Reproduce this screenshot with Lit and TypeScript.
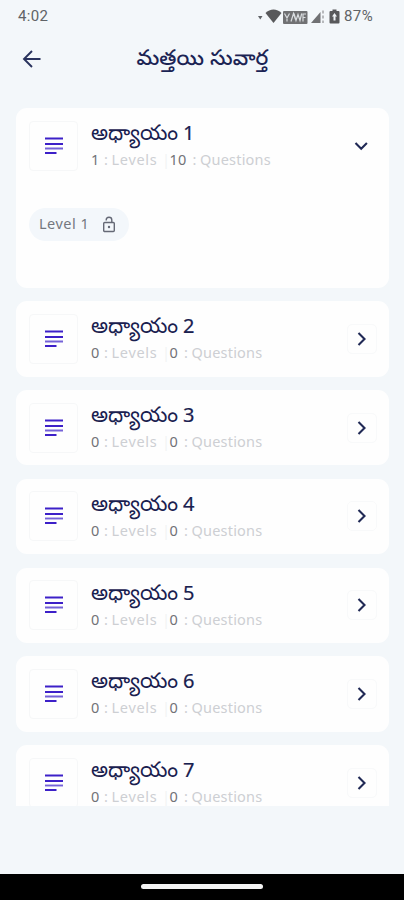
import { LitElement, html, css, svg } from "lit";
import { customElement, property } from "lit/decorators.js";

@customElement("status-bar")
class StatusBar extends LitElement {
  static styles = css`
    :host {
      display: flex;
      height: 33px;
      padding: 0 31px 0 18px;
      align-items: center;
      justify-content: space-between;
      font: 400 15px/33px Roboto, sans-serif;
      color: #606367;
      letter-spacing: 0.35px;
    }
    .right { display: flex; align-items: center; gap: 4px; }
    svg { display: block; }
  `;
  render() {
    return html`
      <span>4:02</span>
      <div class="right">
        <svg width="82" height="18" viewBox="258 7.500 82 18">
          <path d="M258 15.500h4.500l-2.200 3.500z" fill="#606367" />
          <path d="M265.500 12.500c4.500-4.700 11.500-4.700 16 0L273.500 22.500z" fill="#58595b" />
          <rect x="283" y="10.500" width="24.500" height="13" rx="1" fill="#707173" />
          <g fill="none" stroke="#d9dde0" stroke-width="1.200">
            <path d="M284.500 13l2.500 4.500 2.500-4.500M287 17v4M291 21l2.500-8 2 6M294 13l2 7 2-6 2 6 1.700-7M303 21v-7.500h3M303 17h2.500" />
          </g>
          <path d="M311 22.500h9.500V11.500z" fill="#707173" />
          <path d="M323 10v3M323 15v3M323 20v2.500" stroke="#97999c" stroke-width="1.300" />
          <path d="M330.500 10.500h2V9h4v1.500h2a1 1 0 0 1 1 1v10.500a1 1 0 0 1-1 1h-8a1 1 0 0 1-1-1v-10.500a1 1 0 0 1 1-1z" fill="#58595b" />
          <path d="M334.500 12.500l2.500 3.500h-1.500v4h-2v-4H332z" fill="#eef2f5" />
        </svg>
        <span>87%</span>
      </div>
    `;
  }
}

@customElement("chapter-card")
class ChapterCard extends LitElement {
  @property({ type: Number }) number = 1;
  @property({ type: Number }) levels = 0;
  @property({ type: Number }) questions = 0;
  @property({ type: Boolean, reflect: true }) open = false;

  static styles = css`
    :host {
      display: block;
      box-sizing: border-box;
      flex: none;
      height: 75.3px;
      border-radius: 11px;
      background: #fefefe;
      overflow: hidden;
    }
    :host([open]) { height: 179.800px; }
    .row { display: flex; height: 75px; align-items: center; padding: 0 12px 0 13px; }
    .tile {
      display: flex;
      box-sizing: border-box;
      width: 49px;
      height: 50px;
      border: 1px solid #f6f7f8;
      border-radius: 4px;
      align-items: center;
      justify-content: center;
    }
    .text { flex: 1; height: 75px; margin-left: 13px; white-space: nowrap; }
    .title {
      display: flex;
      height: 26px;
      padding-top: 12px;
      color: #19204f;
    }
    .word {
      width: 92px;
      padding-top: 2px;
      font: 400 21.300px/28px "Noto Sans Telugu", "Noto Sans", sans-serif;
    }
    .digit { font: 400 20px/26px "Noto Sans", sans-serif; -webkit-text-stroke: 0.2px #19204f; }
    .meta {
      display: flex;
      height: 20px;
      padding-top: 3px;
      color: #cdcfd3;
      font: 400 14.500px/20px "Noto Sans", sans-serif;
      letter-spacing: 0.2px;
    }
    .count { box-sizing: border-box; flex: none; color: #717277; }
    .one { width: 13px; }
    .two { width: 14.500px; }
    .wide { width: 23px; }
    .colon { width: 7.500px; }
    .levels { width: 50.500px; letter-spacing: 0.7px; }
    .bar { width: 7.500px; color: #f2f3f4; }
    .more {
      display: flex;
      box-sizing: border-box;
      width: 30px;
      height: 30px;
      border: 1px solid #f8f9fa;
      border-radius: 5px;
      align-items: center;
      justify-content: center;
    }
    :host([open]) .more { border-color: transparent; }
    .pill {
      display: flex;
      box-sizing: border-box;
      width: 100px;
      height: 33px;
      margin: 25px 0 0 13px;
      padding: 0 13px 0 10px;
      border-radius: 17px;
      align-items: center;
      justify-content: space-between;
      background: #f3f7fb;
      color: #74777f;
      font: 400 14.500px/30px "Noto Sans", sans-serif;
      letter-spacing: 0.5px;
    }
    .label { height: 33px; }
    svg { display: block; flex: none; }
  `;

  render() {
    const chevron = this.open ? svg`<path d="M8.500 12l5.700 5.700 5.700-5.700" />` : svg`<path d="M11.500 9l6 6-6 6" />`;
    return html`
      <div class="row">
        <div class="tile">
          <svg width="20" height="18" viewBox="0 0.500 20 18" fill="none" stroke="#3d20c8" stroke-width="1.900">
            <path d="M1 2h18M1 7.500h18M1 16.500h11.500" />
            <path d="M1 12h18" stroke="#7562d8" />
          </svg>
        </div>
        <div class="text">
          <div class="title"><span class="word">అధ్యాయం</span><span class="digit">${this.number}</span></div>
          <div class="meta">
            <span class="count one">${this.levels}</span><span class="colon">:</span>
            <span class="levels">Levels</span><span class="bar">|</span>
            <span class="count ${this.questions > 9 ? "wide" : "two"}">${this.questions}</span><span class="colon">:</span>
            <span>Questions</span>
          </div>
        </div>
        <div class="more">
          <svg width="30" height="30" viewBox="0 0 30 30" fill="none" stroke="#202955" stroke-width="2.100">${chevron}</svg>
        </div>
      </div>
      ${this.open
        ? html`<div class="pill">
            <span class="label">Level 1</span>
            <svg width="14" height="17" viewBox="0 0 14 17" fill="none" stroke="#656976" stroke-width="1.400">
              <rect x="1.700" y="6.500" width="10.600" height="9" rx="1" />
              <path d="M4.200 4.500V4a2.800 2.800 0 0 1 5.600 0V6.500" />
              <circle cx="7" cy="11" r="1.200" fill="#656976" stroke="none" />
            </svg>
          </div>`
        : null}
    `;
  }
}

@customElement("app-root")
class AppRoot extends LitElement {
  static styles = css`
    :host {
      display: flex;
      width: 404px;
      height: 900px;
      flex-direction: column;
      overflow: hidden;
      background: #f3f7fa;
    }
    header { display: flex; height: 75px; }
    .back { width: 20px; height: 18px; margin: 17px 0 0 22px; }
    h1 {
      margin: 13px 0 0 94.500px;
      color: #1b2454;
      font: 500 21.200px/30px "Noto Sans Telugu", "Noto Sans", sans-serif;
      white-space: nowrap;
    }
    main {
      display: flex;
      flex-direction: column;
      gap: 13.500px;
      height: 698px;
      padding: 0 15px 0 16px;
      overflow: hidden;
    }
    footer {
      display: flex;
      height: 26.500px;
      margin-top: auto;
      align-items: center;
      justify-content: center;
      background: #000;
    }
    .home { width: 122px; height: 5px; border-radius: 3px; background: #f4f4f4; }
  `;
  render() {
    return html`
      <status-bar></status-bar>
      <header>
        <svg class="back" viewBox="0 0 20 18" fill="none" stroke="#29325d" stroke-width="1.900">
          <path d="M18.500 9H2M10 1L2 9l8 8" />
        </svg>
        <h1>మత్తయి సువార్త</h1>
      </header>
      <main>
        <chapter-card open .number=${1} .levels=${1} .questions=${10}></chapter-card>
        ${[2, 3, 4, 5, 6, 7].map((n) => html`<chapter-card .number=${n}></chapter-card>`)}
      </main>
      <footer><div class="home"></div></footer>
    `;
  }
}
